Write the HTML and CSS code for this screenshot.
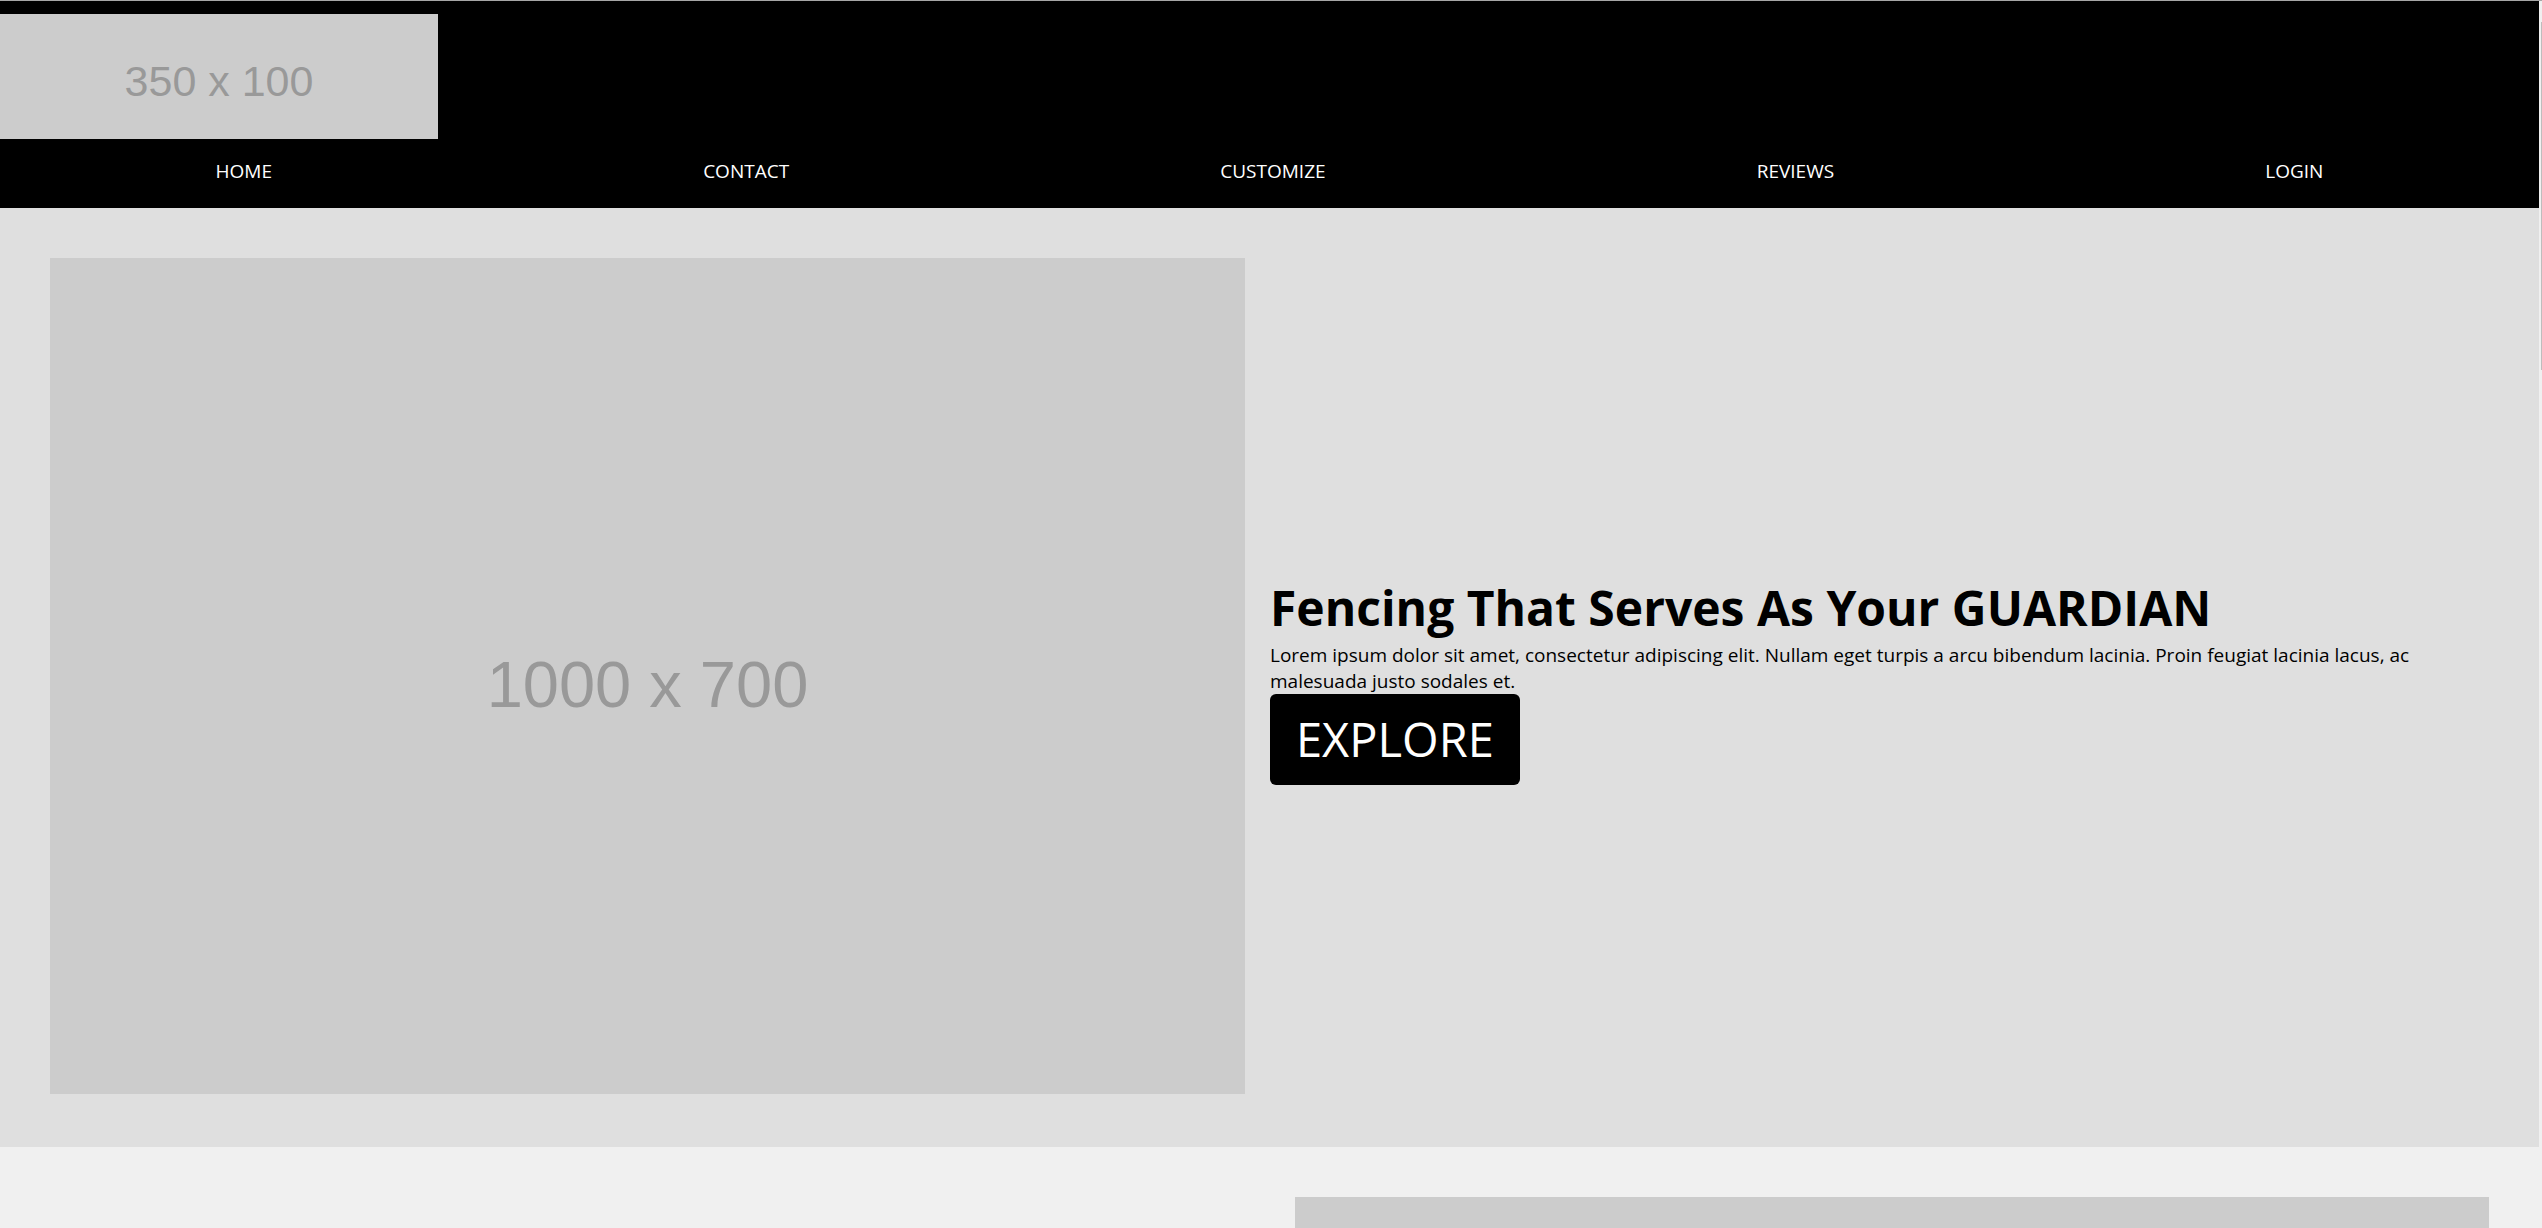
FILE: index.html
```html
<!DOCTYPE html>
<html lang="en">
<head>
<meta charset="utf-8">
<title>Fencing</title>
<link rel="stylesheet" href="styles.css">
</head>
<body>
<div class="page">
  <header class="site-header">
    <div class="logo">350 x 100</div>
    <nav class="main-nav">
      <a href="#">HOME</a>
      <a href="#">CONTACT</a>
      <a href="#">CUSTOMIZE</a>
      <a href="#">REVIEWS</a>
      <a href="#">LOGIN</a>
    </nav>
  </header>
  <section class="hero">
    <div class="hero-image">1000 x 700</div>
    <div class="hero-text">
      <h1>Fencing That Serves As Your GUARDIAN</h1>
      <p>Lorem ipsum dolor sit amet, consectetur adipiscing elit. Nullam eget turpis a arcu bibendum lacinia. Proin feugiat lacinia lacus, ac malesuada justo sodales et.</p>
      <a class="btn" href="#">EXPLORE</a>
    </div>
  </section>
  <section class="feature">
    <div class="feature-text"></div>
    <div class="feature-image"></div>
  </section>
</div>
<div class="scroll-thumb"></div>
</body>
</html>
```
FILE: styles.css
```css
html, body {
  margin: 0;
  padding: 0;
}
body {
  background: #f0f0f0;
  border-top: 1px solid #a6a6a6;
  overflow: hidden;
  font-family: "Open Sans", "Noto Sans", sans-serif;
}
.page {
  width: calc(100% - 3px);
}
.site-header {
  background: #000;
  padding-top: 13px;
}
.logo {
  width: 438px;
  height: 125px;
  box-sizing: border-box;
  padding-top: 10px;
  background: #cccccc;
  color: #999999;
  font-family: "Liberation Sans", Arial, sans-serif;
  font-size: 43px;
  display: flex;
  align-items: center;
  justify-content: center;
}
.main-nav {
  height: 69px;
  box-sizing: border-box;
  padding-bottom: 6px;
  display: flex;
  justify-content: space-around;
  align-items: center;
}
.main-nav a {
  color: #fff;
  text-decoration: none;
  font-size: 19px;
}
.hero {
  background: #dfdfdf;
  padding: 50px 50px 53px;
  display: flex;
  align-items: center;
  gap: 25px;
}
.hero-image {
  flex: 0 0 1195px;
  height: 836px;
  box-sizing: border-box;
  padding-top: 16px;
  background: #cccccc;
  color: #999999;
  font-family: "Liberation Sans", Arial, sans-serif;
  font-size: 65px;
  display: flex;
  align-items: center;
  justify-content: center;
}
.hero-text {
  flex: 1;
  padding-top: 9px;
  color: #000;
}
.hero-text h1 {
  margin: 0 0 2px;
  font-size: 48px;
  font-weight: 700;
  line-height: 1.33;
}
.hero-text p {
  margin: 0;
  font-size: 19px;
  line-height: 26px;
}
.btn {
  display: inline-block;
  background: #000;
  color: #fff;
  text-decoration: none;
  font-size: 47px;
  line-height: 66px;
  padding: 12px 26px 13px;
  border-radius: 6px;
}
.feature {
  padding: 50px;
  display: flex;
  gap: 50px;
}
.feature-text {
  flex: 1;
}
.feature-image {
  flex: 0 0 1194px;
  height: 836px;
  background: #cccccc;
}
.scroll-thumb {
  position: fixed;
  top: 22px;
  right: 0;
  width: 1px;
  height: 348px;
  background: #bdbdbd;
}
```
